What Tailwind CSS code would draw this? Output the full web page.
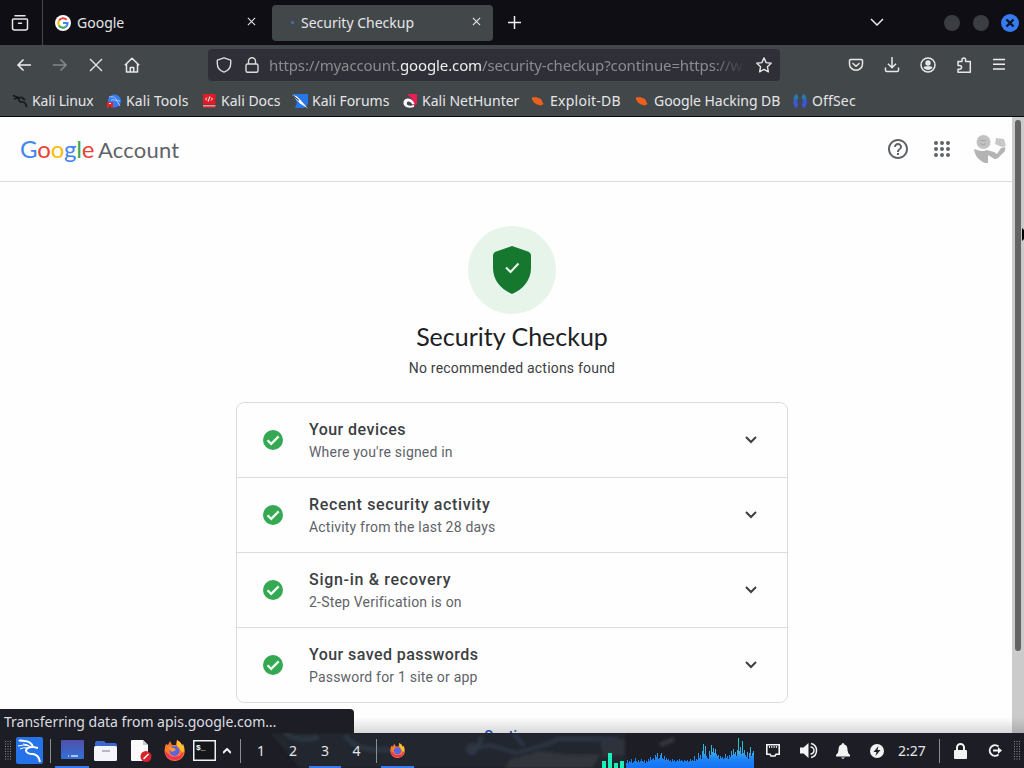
<!DOCTYPE html>
<html lang="en">
<head>
    <meta charset="UTF-8">
    <meta name="viewport" content="width=device-width, initial-scale=1.0">
    <title>Security Checkup</title>
    <script src="https://cdn.jsdelivr.net/npm/@tailwindcss/browser@4"></script>
</head>
<body class="w-[1024px] h-[768px] overflow-hidden flex flex-col bg-[#fefefe] font-['Noto_Sans',sans-serif] text-[14px] text-[#e6e6e8]">

    <!-- Tab strip -->
    <header class="h-[45px] shrink-0 flex items-center bg-[#0e0e14]">
        <div class="w-[43px] h-full flex items-center justify-center border-r border-[#45484d]">
            <svg class="w-[18px] h-[18px] -ml-0.5" viewBox="0 0 18 18" fill="none" stroke="#e8e8e8" stroke-width="1.5" stroke-linecap="round">
                <path d="M4 1.7h10M2.500 5h13a1 1 0 0 1 1 1v8a2 2 0 0 1-2 2h-11a2 2 0 0 1-2-2V6a1 1 0 0 1 1-1zM7.500 9.200h3"/>
            </svg>
        </div>
        <div class="w-[229px] flex items-center pl-3">
            <svg class="w-4 h-4" viewBox="0 0 16 16" fill="none" stroke-width="2">
                <circle cx="8" cy="8" r="8" fill="#fff"/>
                <path d="M11.6 4.8A4.6 4.6 0 0 0 4 5.6" stroke="#ea4335"/>
                <path d="M4 5.6a4.6 4.6 0 0 0 0 4.8" stroke="#fbbc05"/>
                <path d="M4 10.4a4.6 4.6 0 0 0 6.8 1.3" stroke="#34a853"/>
                <path d="M8 8h4.6a4.6 4.6 0 0 1-1.8 3.7" stroke="#4285f4"/>
            </svg>
            <span class="ml-[6px] w-[170px]">Google</span>
            <svg class="w-[9px] h-[9px] -mt-0.5" viewBox="0 0 10 10" stroke="#e8e8e8" stroke-width="1.2"><path d="M1 1l8 8M9 1l-8 8"/></svg>
        </div>
        <div class="w-[221px] h-9 flex items-center rounded bg-[#42474a]">
            <i class="ml-[19px] w-[3px] h-[3px] rounded-full bg-[#4a6fc0]"></i>
            <span class="ml-[7px] w-[171px]">Security Checkup</span>
            <svg class="w-[9px] h-[9px] -mt-0.5" viewBox="0 0 10 10" stroke="#e8e8e8" stroke-width="1.2"><path d="M1 1l8 8M9 1l-8 8"/></svg>
        </div>
        <svg class="ml-[15px] w-[13px] h-[13px]" viewBox="0 0 13 13" stroke="#f0f0f0" stroke-width="1.5"><path d="M6.5 0v13M0 6.5h13"/></svg>
        <svg class="ml-[349px] w-[14px] h-[8px] -mt-0.5" viewBox="0 0 14 8" fill="none" stroke="#e8e8e8" stroke-width="1.5"><path d="M1 1l6 6 6-6"/></svg>
        <i class="ml-[60px] w-4 h-4 rounded-full bg-[#3a3d42]"></i>
        <i class="ml-[13px] w-4 h-4 rounded-full bg-[#3a3d42]"></i>
        <svg class="ml-[12px] w-[18px] h-[18px]" viewBox="0 0 18 18"><circle cx="9" cy="9" r="9" fill="#367bf0"/><path d="M5.5 5.5l7 7M12.5 5.5l-7 7" stroke="#0e1222" stroke-width="2.400"/></svg>
    </header>

    <!-- Navigation bar -->
    <nav class="h-10 shrink-0 flex items-center bg-[#42474a]">
        <svg class="ml-4 w-4 h-4" viewBox="0 0 16 16" fill="none" stroke="#eeeeee" stroke-width="1.500"><path d="M15 8H1.500M7.500 2.500L2 8l5.500 5.500"/></svg>
        <svg class="ml-5 w-4 h-4" viewBox="0 0 16 16" fill="none" stroke="#85898b" stroke-width="1.500"><path d="M1 8h13.500M8.500 2.500L14 8l-5.500 5.500"/></svg>
        <svg class="ml-5 w-4 h-4" viewBox="0 0 16 16" fill="none" stroke="#e4e4e4" stroke-width="1.4"><path d="M2 2l12 12M14 2L2 14"/></svg>
        <svg class="ml-5 w-4 h-4" viewBox="0 0 16 16" fill="none" stroke="#e8e8e8" stroke-width="1.5" stroke-linejoin="round"><path d="M.8 8.200l7.200-7 7.200 7M2.500 6.800V15h11V6.800M6.300 15v-4.500h3.400V15"/></svg>
        <div class="ml-[68px] w-[572px] h-[32px] flex items-center rounded bg-[#2f3037]">
            <svg class="ml-2 w-4 h-4" viewBox="0 0 16 16" fill="none" stroke="#dcdcdc" stroke-width="1.4" stroke-linejoin="round"><path d="M8 .8l6.700 2.400v3.300c0 4-2.500 7.300-6.700 8.700C3.800 13.800 1.300 10.500 1.300 6.500V3.200z"/></svg>
            <svg class="ml-3 w-4 h-4" viewBox="0 0 16 16" fill="none" stroke="#dcdcdc" stroke-width="1.4"><rect x="2" y="7" width="12" height="8.200" rx="1.500"/><path d="M4.500 7V4.300a3.500 3.500 0 0 1 7 0V7"/></svg>
            <span id="url" class="ml-[9px] w-[476px] overflow-hidden whitespace-nowrap text-[#8b8c91] text-[15px] tracking-[-0.125px] mask-r-from-93%">https://myaccount.<span class="text-[#eeeeee]">google.com</span>/security-checkup?continue=https://ww</span>
            <svg class="ml-[11px] w-4 h-4" viewBox="0 0 16 16" fill="none" stroke="#e4e4e4" stroke-width="1.4" stroke-linejoin="round"><path d="M8 .9l2.100 4.700 5.100.6-3.800 3.500 1 5.100L8 12.300l-4.400 2.500 1-5.100L.8 6.200l5.100-.6z"/></svg>
        </div>
        <svg class="ml-[68px] w-4 h-4" viewBox="0 0 16 16" fill="none" stroke="#e8e8e8" stroke-width="1.500" stroke-linejoin="round" stroke-linecap="round"><path d="M2.800 2.500h10.400a1.300 1.300 0 0 1 1.300 1.300V7a6.500 6.200 0 0 1-13 0V3.800a1.300 1.300 0 0 1 1.300-1.300zM5 6.500l3 2.800 3-2.800"/></svg>
        <svg class="ml-5 w-4 h-4" viewBox="0 0 16 16" fill="none" stroke="#e8e8e8" stroke-width="1.500"><path d="M8 0v10.500M4 6.800l4 4 4-4M1.500 10.500v2.700c0 .9.500 1.300 1.300 1.300h10.400c.8 0 1.300-.4 1.300-1.300v-2.700"/></svg>
        <svg class="ml-5 w-4 h-4" viewBox="0 0 16 16" fill="none" stroke="#e8e8e8" stroke-width="1.500"><circle cx="8" cy="8" r="7"/><circle cx="8" cy="6" r="2.700" fill="#e8e8e8" stroke="none"/><path d="M3.500 10.500C4 9.300 5.500 9.300 8 9.300s4 0 4.500 1.200A5.300 5.300 0 0 1 3.500 10.500z" fill="#e8e8e8" stroke="none"/></svg>
        <svg class="ml-5 w-4 h-4" viewBox="0 0 16 16" fill="none" stroke="#e8e8e8" stroke-width="1.500" stroke-linejoin="round"><path d="M2 4.500h4V2.800a1.800 1.800 0 0 1 3.600 0v1.700h4.700v10.700H2v-3h1.700a1.800 1.800 0 0 0 0-3.800H2z"/></svg>
        <svg class="ml-[21px] w-3 h-3 -mt-0.5" viewBox="0 0 12 12" stroke="#eeeeee" stroke-width="1.500"><path d="M0 1.500h12M0 6.200h12M0 11h12"/></svg>
    </nav>

    <!-- Bookmarks -->
    <div class="h-8 shrink-0 flex items-center whitespace-nowrap bg-[#42474a] border-b border-[#08090c]">
        <a class="ml-3 w-[94px] flex items-center gap-1">
            <svg class="w-4 h-4 shrink-0" viewBox="0 0 16 16" fill="none" stroke="#14191c"><path d="M1 2.500l5 2 4 0 3 2.500M7 5q-1 4 3 4 4 0 4.500 5M2 6l4-1" stroke-width="1.700"/></svg>
            <span class="tracking-[-0.15px]">Kali Linux</span>
        </a>
        <a class="w-[95px] flex items-center gap-1">
            <svg class="w-4 h-4 shrink-0" viewBox="0 0 16 16"><circle cx="8.500" cy="8" r="6.500" fill="#367bf0"/><path d="M3 4c5-1 7 1 8 4l3 5M5 7c3-1 5 1 9 1" fill="none" stroke="#a8c8ff"/><path d="M1 9h6v6H5v-2H3v2H1z" fill="#e3242b"/><path d="M3 10.500h2" stroke="#fff"/></svg>
            <span class="tracking-[0.1px]">Kali Tools</span>
        </a>
        <a class="w-[91px] flex items-center gap-1">
            <svg class="w-4 h-4 shrink-0" viewBox="0 0 16 16" fill="none"><path d="M2 1h12.500v10.500H2zM2 13.500h12.500V15H2z" fill="#df1b25"/><path d="M2 12h12.500v1.500H2z" fill="#c9a5a8"/><path d="M6 4.500L4.500 6 6 7.500M10 4.500L11.500 6 10 7.500M8.700 3.500L7.300 8.500" stroke="#fff"/></svg>
            Kali Docs
        </a>
        <a class="w-[110px] flex items-center gap-1">
            <svg class="w-4 h-4 shrink-0" viewBox="0 0 16 16"><path d="M1 1h15v10l-4 4H3l2-5z" fill="#2777e8"/><path d="M0 1.500l5 2 4 4 7 8-8-5z" fill="#fff"/><path d="M1 2.500l6 5" stroke="#222"/></svg>
            Kali Forums
        </a>
        <a class="w-[128px] flex items-center gap-1">
            <svg class="w-4 h-4 shrink-0" viewBox="0 0 16 16"><path d="M5 1h10v9l-3 4-2-8z" fill="#e91e57"/><path d="M12 14C5 16 1 13 1.500 9s6-5 9.500-1l1.500 3-2 .5C8.500 8 5 7.500 4.800 10s3 3.500 7.200 2z" fill="#fff"/></svg>
            Kali NetHunter
        </a>
        <a class="w-[104px] flex items-center gap-1">
            <svg class="w-4 h-4 shrink-0" viewBox="0 0 16 16"><path d="M2 4.500l4-.5 5 2 2.500 5-2.500 1.500-4-1-3-2-2-3z" fill="#ec5f1c"/></svg>
            <span class="tracking-[0.25px]">Exploit-DB</span>
        </a>
        <a class="w-[158px] flex items-center gap-1">
            <svg class="w-4 h-4 shrink-0" viewBox="0 0 16 16"><path d="M2 4.500l4-.5 5 2 2.500 5-2.500 1.500-4-1-3-2-2-3z" fill="#ec5f1c"/></svg>
            <span class="tracking-[-0.05px]">Google Hacking DB</span>
        </a>
        <a class="flex items-center gap-1">
            <svg class="w-4 h-4 shrink-0" viewBox="0 0 16 16" fill="none" stroke-width="4"><path d="M5.500 2.500C2.500 4 2.500 12 5.500 13.500" stroke="#3d57cf"/><path d="M10.500 2.500c3 1.500 3 9.500 0 11" stroke="#3a55dc"/><path d="M3.500 6C4 4 4.500 3 5.500 2.500M10.500 2.500C11.500 3 12 4 12.500 6" stroke="#22829c"/></svg>
            <span class="tracking-[0.15px]">OffSec</span>
        </a>
    </div>

    <!-- Page -->
    <div class="relative h-[616px] shrink-0 flex font-[Roboto,sans-serif] text-[#3c4043]">
        <main class="w-[1012px] flex flex-col">
            <div class="h-[65px] shrink-0 flex items-center border-b border-[#dadce0] pl-[20px]">
                <div id="brand" class="w-[868px] flex items-center gap-1 whitespace-nowrap font-[Lato] text-[22px] text-[#5f6368]">
                    <span class="w-[74px] text-[24px] tracking-[-0.2px]"><span class="text-[#4285f4]">G</span><span class="text-[#ea4335]">o</span><span class="text-[#fbbc05]">o</span><span class="text-[#4285f4]">g</span><span class="text-[#34a853]">l</span><span class="text-[#ea4335]">e</span></span>
                    <span class="tracking-[0.2px]">Account</span>
                </div>
                <svg class="w-5 h-5" viewBox="2 2 20 20" fill="#5f6368"><path d="M11 18h2v-2h-2v2zm1-16C6.480 2 2 6.480 2 12s4.480 10 10 10 10-4.480 10-10S17.520 2 12 2zm0 18c-4.410 0-8-3.590-8-8s3.590-8 8-8 8 3.590 8 8-3.590 8-8 8zm0-14c-2.210 0-4 1.790-4 4h2c0-1.100.9-2 2-2s2 .9 2 2c0 2-3 1.750-3 5h2c0-2.250 3-2.500 3-5 0-2.210-1.790-4-4-4z"/></svg>
                <svg class="ml-[26px] w-4 h-4" viewBox="0 0 16 16" fill="none" stroke="#5f6368" stroke-width="4" stroke-linecap="round"><path d="M2 2h.01M8 2h.01M14 2h.01M2 8h.01M8 8h.01M14 8h.01M2 14h.01M8 14h.01M14 14h.01"/></svg>
                <svg class="ml-6 w-8 h-[30px]" viewBox="0 0 32 30"><circle cx="9.500" cy="8" r="7" fill="#c2c2c2"/><path d="M6 6.500h6M6 9.500q3 3 6 0" stroke="#a4a4a4" fill="none"/><path d="M0 15l3 1q6 2 10 0l7 2 3 2 4-6 4-1q1 4-2 6l-5 5q-3 2-5 0l-5-3v8h-3C6 27 1 23 0 15z" fill="#b4b4b4"/><path d="M22 4l8 1 2 7-4 1-7-3z" fill="#c8c8c8"/></svg>
            </div>
            <div class="flex flex-col items-center">
                <div class="mt-[44px] w-[88px] h-[88px] ml-3 shrink-0 rounded-full bg-[#e6f4ea] flex items-center justify-center">
                    <svg class="w-[38px] h-[48px]" viewBox="0 0 38 48"><path d="M19 0l16.500 5.800Q38 7 38 9.500V22c0 12-8 21.500-19 26C8 43.500 0 34 0 22V9.500Q0 7 2.500 5.800z" fill="#16772f"/><path d="M13 21.500l4.500 4.500 8-8.500" fill="none" stroke="#eaf8ed" stroke-width="2"/></svg>
                </div>
                <h1 id="title" class="ml-3 mt-1.5 h-8 leading-8 font-[Lato] text-[25px] text-[#202124] whitespace-nowrap">Security Checkup</h1>
                <p class="ml-3 mt-1.5 h-5 leading-5 text-[14px] tracking-[0.2px]">No recommended actions found</p>
                <div class="ml-3 mt-[24px] w-[552px] shrink-0 rounded-lg border border-[#dadce0] divide-y divide-[#dadce0]">
                    <div class="h-[75px] flex items-center">
                        <svg class="ml-[26px] w-5 h-5" viewBox="2 2 20 20"><circle cx="12" cy="12" r="10" fill="#34a853"/><path d="M6.500 12.200l3.700 3.700 7.500-7.500" fill="none" stroke="#f2fff4" stroke-width="2.200"/></svg>
                        <div class="ml-[26px] w-[436px]">
                            <h2 class="h-6 leading-6 text-[16px] font-medium tracking-[0.45px]">Your devices</h2>
                            <p class="h-[21px] leading-[21px] text-[#5f6368] tracking-[0.2px]">Where you're signed in</p>
                        </div>
                        <svg class="w-3 h-2" viewBox="0 0 12 8" fill="none" stroke="#3c4043" stroke-width="2"><path d="M1 1l5 5 5-5"/></svg>
                    </div>
                    <div class="h-[75px] flex items-center">
                        <svg class="ml-[26px] w-5 h-5" viewBox="2 2 20 20"><circle cx="12" cy="12" r="10" fill="#34a853"/><path d="M6.500 12.200l3.700 3.700 7.500-7.500" fill="none" stroke="#f2fff4" stroke-width="2.200"/></svg>
                        <div class="ml-[26px] w-[436px]">
                            <h2 class="h-6 leading-6 text-[16px] font-medium tracking-[0.63px]">Recent security activity</h2>
                            <p class="h-[21px] leading-[21px] text-[#5f6368] tracking-[0.2px]">Activity from the last 28 days</p>
                        </div>
                        <svg class="w-3 h-2" viewBox="0 0 12 8" fill="none" stroke="#3c4043" stroke-width="2"><path d="M1 1l5 5 5-5"/></svg>
                    </div>
                    <div class="h-[75px] flex items-center">
                        <svg class="ml-[26px] w-5 h-5" viewBox="2 2 20 20"><circle cx="12" cy="12" r="10" fill="#34a853"/><path d="M6.500 12.200l3.700 3.700 7.500-7.500" fill="none" stroke="#f2fff4" stroke-width="2.200"/></svg>
                        <div class="ml-[26px] w-[436px]">
                            <h2 class="h-6 leading-6 text-[16px] font-medium tracking-[0.7px]">Sign-in &amp; recovery</h2>
                            <p class="h-[21px] leading-[21px] text-[#5f6368] tracking-[0.2px]">2-Step Verification is on</p>
                        </div>
                        <svg class="w-3 h-2" viewBox="0 0 12 8" fill="none" stroke="#3c4043" stroke-width="2"><path d="M1 1l5 5 5-5"/></svg>
                    </div>
                    <div class="h-[74px] flex items-center">
                        <svg class="ml-[26px] w-5 h-5" viewBox="2 2 20 20"><circle cx="12" cy="12" r="10" fill="#34a853"/><path d="M6.500 12.200l3.700 3.700 7.500-7.500" fill="none" stroke="#f2fff4" stroke-width="2.200"/></svg>
                        <div class="ml-[26px] w-[436px]">
                            <h2 class="h-6 leading-6 text-[16px] font-medium tracking-[0.43px]">Your saved passwords</h2>
                            <p class="h-[21px] leading-[21px] text-[#5f6368] tracking-[0.2px]">Password for 1 site or app</p>
                        </div>
                        <svg class="w-3 h-2" viewBox="0 0 12 8" fill="none" stroke="#3c4043" stroke-width="2"><path d="M1 1l5 5 5-5"/></svg>
                    </div>
                </div>
                <a class="ml-3 mt-[23px] leading-5 font-medium text-[#1a55c8]">Continue</a>
            </div>
        </main>
        <!-- Scrollbar -->
        <div class="w-3 bg-[#cbcbcb] pt-[3px] pl-[3px]"><div class="w-[6px] h-[531px] rounded-full bg-[#636363]"></div></div>
        <!-- Panel shadow over the page bottom -->
        <div class="absolute inset-x-0 bottom-0 h-4 bg-linear-to-b from-transparent to-black/15"></div>
        <!-- Mouse pointer -->
        <svg class="absolute right-0 top-[110px] w-[3px] h-4" viewBox="0 0 3 16"><path d="M1 1l2 2v9l-2 2z" fill="#000"/></svg>
        <!-- Status text -->
        <div id="status" class="absolute left-0 bottom-0 w-[354px] h-6 leading-[25px] pl-1 rounded-tr bg-[#1c1d25] font-['Noto_Sans'] text-[#dedee0] whitespace-nowrap">Transferring data from apis.google.com…</div>
    </div>

    <!-- Desktop panel -->
    <footer class="relative h-[35px] shrink-0 flex items-center bg-[#1c1d25]">
        <!-- Wallpaper showing through the panel -->
        <svg class="absolute inset-0 w-full h-full" viewBox="0 0 1024 35"><defs><filter id="soft"><feGaussianBlur stdDeviation="1.500"/></filter></defs><g filter="url(#soft)"><path d="M270 0h140v35H300zM400 0h225v35H400z" fill="#22252d"/><path d="M285 0q14 10 33 4M345 2q8 13 30 15h20" fill="none" stroke="#2c3542" stroke-width="5"/><path d="M472 16l18-4 26 8q32-8 42-14h60" fill="none" stroke="#2b3444" stroke-width="4"/><circle cx="472" cy="16" r="6" fill="#2e3644"/><path d="M482 3l-4 12M514 1l10 12" stroke="#2e3644" stroke-width="4"/><path d="M505 35l5-8 30-9q30 6 60 3l-8 14z" fill="#33353b"/><path d="M600 8l25-2v16l-22 2z" fill="#2d323a"/><path d="M660 12l14-6" stroke="#34363d" stroke-width="5"/></g></svg>
        <div class="relative w-full h-full flex items-center">
            <svg class="ml-[5px] w-[6px] h-[19px]" viewBox="0 0 6 19" stroke="#888b92" stroke-dasharray="1 1.500"><path d="M.5 0v19M3 0v19M5.500 0v19"/></svg>
            <svg class="ml-[5px] w-[27px] h-[27px]" viewBox="0 0 27 27"><rect width="27" height="27" rx="2" fill="#2672e8"/><path d="M8 4q7 0 9 6l5 1M8 4Q4 3 3 4M17 10q-7 0-7 4 1 3 7 3 6 1 7 8" fill="none" stroke="#fff" stroke-width="2"/><path d="M2 9q6-2 11 0M4 12q3-2 8-1M7 7q4 0 8 3" fill="none" stroke="#fff"/></svg>
            <i class="ml-[7px] w-px h-[24px] bg-[#8c8d92]"></i>
            <div class="ml-[4px] w-[34px] h-full border-b-2 border-[#367bf0] flex items-center justify-center">
                <svg class="w-[23px] h-[19px]" viewBox="0 0 23 19"><defs><linearGradient id="desk" x2="0" y2="1"><stop stop-color="#5050ac"/><stop offset="1" stop-color="#3170d4"/></linearGradient></defs><rect width="23" height="19" rx="1" fill="url(#desk)"/><path d="M7 16h1M10 16h7" stroke="#d6ddff" stroke-width="1.500"/></svg>
            </div>
            <svg class="ml-[5px] w-[23px] h-[20px]" viewBox="0 0 23 20"><path d="M1 2q0-2 2-2h7l2 2h9q2 0 2 2v7H1z" fill="#3c68ce"/><rect y="5" width="23" height="15" rx="1.500" fill="#f4f5fb"/><path d="M8 10h8" stroke="#a2a4ad" stroke-width="1.500"/></svg>
            <svg class="ml-[14px] w-[21px] h-[22px]" viewBox="0 0 21 22"><path d="M0 1q0-1 1-1h11l5 5v16H1q-1 0-1-1z" fill="#fafafa"/><path d="M12 0v5h5z" fill="#ccc"/><circle cx="15" cy="16.500" r="5.500" fill="#d5222b"/><path d="M12.500 19l5-5" stroke="#fff" stroke-width="1.500"/></svg>
            <svg class="ml-[12px] w-[21px] h-[21px]" viewBox="0 0 21 21"><path d="M2 4l2 1 2-4 2 4 4 0 1-5q5 3 5 6l1-2q4 9-1 14c-5 5-14 3-16-2Q-1 11 2 4z" fill="#ff7a2c"/><path d="M1 11q1 9 10 9 8 0 9-10l-4 6-8 1z" fill="#f0305b"/><path d="M13 0q5 3 5 6l1-2q2 6 0 9l-4-5q-3-3-2-8z" fill="#ffc331"/><circle cx="10.500" cy="11" r="5" fill="#5966df"/><path d="M4 7l6 1 2 2-4 2-2-2z" fill="#ff992d"/></svg>
            <svg class="ml-[8px] w-[23px] h-[21px]" viewBox="0 0 23 21"><rect x=".75" y=".75" width="21.500" height="19.500" fill="#15161b" stroke="#f1f1f1" stroke-width="1.500"/><text x="3" y="10" font-family="Liberation Mono" font-size="8" font-weight="700" fill="#fff">$_</text></svg>
            <svg class="ml-[7px] w-2 h-[6px]" viewBox="0 0 8 6" fill="none" stroke="#f4f4f4" stroke-width="2"><path d="M0 5l4-4 4 4"/></svg>
            <i class="ml-[9px] w-px h-[24px] bg-[#8c8d92]"></i>
            <div class="ml-[4px] h-full flex text-center leading-[35px]">
                <span class="w-8">1</span>
                <span class="w-8">2</span>
                <span class="w-8 h-full border-b-2 border-[#367bf0]">3</span>
                <span class="w-[31px]">4</span>
            </div>
            <i class="ml-[4px] w-px h-[24px] bg-[#8c8d92]"></i>
            <div class="ml-[4px] w-[33px] h-full border-b-2 border-[#367bf0] flex items-center justify-center">
                <svg class="w-[15px] h-[15px] mt-0.5" viewBox="0 0 21 21"><path d="M2 4l2 1 2-4 2 4 4 0 1-5q5 3 5 6l1-2q4 9-1 14c-5 5-14 3-16-2Q-1 11 2 4z" fill="#ff7a2c"/><path d="M1 11q1 9 10 9 8 0 9-10l-4 6-8 1z" fill="#f0305b"/><path d="M13 0q5 3 5 6l1-2q2 6 0 9l-4-5q-3-3-2-8z" fill="#ffc331"/><circle cx="10.500" cy="11" r="5" fill="#5966df"/></svg>
            </div>
            <!-- CPU graph -->
            <svg id="cpu" class="ml-[187px] w-[153px] h-[35px]" viewBox="0 0 153 35">
                <defs><linearGradient id="load" gradientUnits="userSpaceOnUse" x1="0" y1="5" x2="0" y2="35"><stop stop-color="#19d2c0"/><stop offset=".5" stop-color="#38a8e8"/><stop offset=".68" stop-color="#1f86f8"/><stop offset="1" stop-color="#1473f5"/></linearGradient></defs>
                <path d="M1 28h4v7H1zM7 20h4v15H7zM13 30h4v5h-4zM19 28h4v7h-4z" fill="#17f0b8"/>
                <path id="bars" fill="none" stroke="url(#load)"/>
            </svg>
            <svg class="ml-[12px] w-[14px] h-[13px]" viewBox="0 0 14 13" fill="none" stroke="#f3f3f3" stroke-width="1.600"><path d="M.8.800h12.400v9.500H10L9 12H5l-1-1.700H.8z"/><path d="M3.500 2v2M5.800 2v2M8.100 2v2M10.400 2v2" stroke-width="1"/></svg>
            <svg class="ml-[20px] w-[18px] h-[17px]" viewBox="0 0 18 17" fill="none" stroke="#f3f3f3" stroke-width="1.500"><path d="M0 5.500h3.500L8.500 1v15l-5-4.500H0z" fill="#f3f3f3" stroke="none"/><path d="M10.500 5a3.500 3.500 0 0 1 0 7M11 1.500a7.200 7.200 0 0 1 0 14"/></svg>
            <svg class="ml-[18px] w-[14px] h-[16px]" viewBox="0 0 14 16" fill="#f3f3f3"><path d="M7 0q1.200 0 1.300 1.500C11 2.300 11.500 4.500 11.500 7q0 3 2.500 5v1.500H0V12q2.500-2 2.500-5c0-2.500.5-4.700 3.200-5.500Q5.800 0 7 0zM5 14.500h4L7 16z"/></svg>
            <svg class="ml-[20px] w-[14px] h-[14px]" viewBox="0 0 14 14"><circle cx="7" cy="7" r="7" fill="#f3f3f3"/><path d="M8.500 2L3.500 8h3L5.500 12l5-6h-3z" fill="#1c1d25"/></svg>
            <span id="clock" class="ml-[14px] w-[41px]">2:27</span>
            <i class="w-px h-[24px] bg-[#8c8d92]"></i>
            <svg class="ml-[14px] w-[13px] h-[16px]" viewBox="0 0 13 16"><rect y="7" width="13" height="9" rx="1" fill="#f3f3f3"/><path d="M3 7V4.500a3.500 3.500 0 0 1 7 0V7" fill="none" stroke="#f3f3f3" stroke-width="2"/></svg>
            <svg class="ml-[21px] w-[14px] h-[13px]" viewBox="0 0 14 13" fill="none" stroke="#f3f3f3" stroke-width="2"><path d="M10.500 2.500a5.300 5.300 0 1 0 0 8M5 6.500h6"/><path d="M10 3l4 3.500-4 3.500z" fill="#f3f3f3" stroke="none"/></svg>
            <svg class="ml-[12px] w-[6px] h-[19px]" viewBox="0 0 6 19" stroke="#888b92" stroke-dasharray="1 1.500"><path d="M.5 0v19M3 0v19M5.500 0v19"/></svg>
        </div>
    </footer>

    <script>
        // one value per pixel column
        const load = [5,8,5,7,6,9,5,6,7,10,7,6,8,6,7,9,7,6,8,5,7,6,9,7,11,8,9,10,8,13,11,15,9,10,13,15,10,9,12,8,10,8,9,7,8,6,9,7,8,6,7,8,7,9,7,8,7,6,8,7,7,8,6,7,9,7,8,7,12,7,9,8,15,10,13,9,17,24,14,22,12,10,9,17,13,23,16,20,15,19,14,12,13,9,12,10,11,9,10,14,10,12,9,13,11,17,13,19,14,16,12,18,30,17,21,14,27,15,18,13,11,16,9,15,21,12,15,17];
        const bars = document.getElementById('bars');
        bars.setAttribute('d', load.map((v, i) => `M${i + 25.5} 35V${35 - v}`).join(''));
    </script>
</body>
</html>
